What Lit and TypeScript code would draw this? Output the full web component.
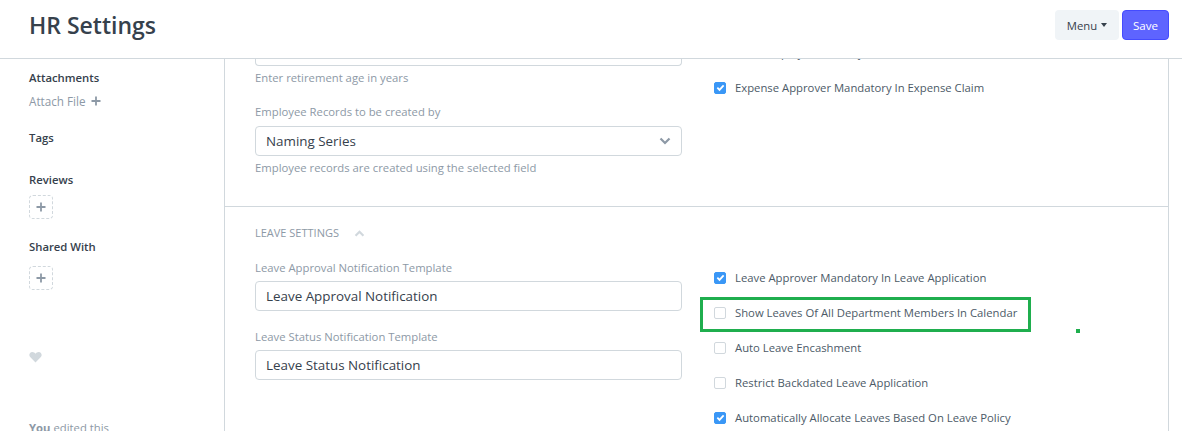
import { LitElement, html, css } from "lit";
import { customElement } from "lit/decorators.js";

const plus = html`<svg class="plus" viewBox="0 0 12 12" width="12" height="12"><path d="M6 1.5v9M1.5 6h9" stroke="#8d99a6" stroke-width="1.8" fill="none"/></svg>`;

@customElement("app-root")
export class AppRoot extends LitElement {
  static styles = css`
    :host { display: block; width: 1182px; height: 431px; overflow: hidden; background: #fff;
      font-family: "Open Sans", "Noto Sans", sans-serif; font-size: 11.3px; color: #4c5a67; }
    * { box-sizing: border-box; }
    .top { height: 59px; border-bottom: 1px solid #d1d8dd; display: flex; align-items: center; justify-content: space-between; padding: 0 13px 0 29px; }
    h1 { margin: 0; font-size: 23px; font-weight: 600; color: #36414c; line-height: 1; padding-bottom: 8px; }
    .actions { display: flex; gap: 3px; padding-bottom: 8px; align-items: center; }
    .btn { height: 30px; border-radius: 4px; display: flex; align-items: center; }
    .menu { width: 64px; background: #f0f4f7; color: #36414c; justify-content: center; gap: 4px; }
    .caret { width: 0; height: 0; border: 3.5px solid transparent; border-top: 4px solid #36414c; border-bottom: 0; }
    .save { width: 47px; background: #5e64ff; border: 1px solid #444bff; color: #fff; justify-content: center; font-size: 11.6px; }
    .body { display: flex; height: 372px; overflow: hidden; }
    .side { width: 225px; flex: none; border-right: 1px solid #d1d8dd; padding: 11px 0 0 29px; color: #36414c; }
    .st { font-weight: 600; line-height: 16px; color: #36414c; }
    .attach { margin-top: 7px; line-height: 16px; color: #8d99a6; display: flex; align-items: center; gap: 4px; font-size: 11.7px; }
    .tags { margin-top: 21px; }
    .reviews { margin-top: 26px; }
    .shared { margin-top: 20px; }
    .add { margin-top: 7px; width: 24px; height: 24px; border: 1px dashed #d1d8dd; border-radius: 4px; display: flex; align-items: center; justify-content: center; }
    .shared + .add { margin-top: 11px; }
    .heart { display: block; margin-top: 61px; }
    .edited { margin-top: 57px; line-height: 16px; color: #8d99a6; white-space: nowrap; }
    .edited b { font-weight: 700; }
    .main { width: 944px; flex: none; border-right: 1px solid #d1d8dd; }
    .sec { border-bottom: 1px solid #d1d8dd; height: 148px; padding: 0 30px; display: grid; grid-template-columns: 427px 427px; column-gap: 32px; }
    .sec2 { border-bottom: 0; height: auto; padding-top: 18px; display: block; }
    .clip { height: 7px; border: 1px solid #d1d8dd; border-top: 0; border-radius: 0 0 4px 4px; }
    .help { color: #8d99a6; line-height: 16px; margin-top: 4px; }
    .lab { color: #8d99a6; line-height: 16px; margin-top: 18px; }
    .inp { height: 30px; border: 1px solid #d1d8dd; border-radius: 4px; margin-top: 6px; padding: 0 10px; display: flex; align-items: center; justify-content: space-between; font-size: 13.4px; color: #36414c; }
    .head { display: flex; align-items: center; gap: 15px; line-height: 16px; color: #8d99a6; font-size: 11px; }
    .cols { display: grid; grid-template-columns: 427px 427px; column-gap: 32px; }
    .cols .lab:first-child { margin-top: 19px; }
    .cols .inp { margin-top: 5px; }
    .cks { padding-top: 19px; }
    .ck { display: flex; align-items: center; gap: 9px; height: 35px; position: relative; white-space: nowrap; }
    .box { width: 12px; height: 12px; border: 1px solid #d1d8dd; border-radius: 2px; background: #fff; flex: none; display: flex; align-items: center; justify-content: center; }
    .box.on { background: #3a97f6; border-color: #3a97f6; }
    .hl { position: absolute; left: -14px; top: 2px; width: 331px; height: 35px; border: 3px solid #1fae4e; pointer-events: none; }
    .dot { position: absolute; left: 1076px; top: 329px; width: 4px; height: 4px; background: #1fae4e; }
    .rightcol { margin-top: -24px; }
    .wrap { position: relative; }
  `;

  ck(label: string, on: boolean, hl = false) {
    return html`<div class="ck">
      <span class="box ${on ? "on" : ""}">${on ? html`<svg viewBox="0 0 10 10" width="9" height="9"><path d="M1.5 5.2l2.4 2.4 4.6-5" stroke="#fff" stroke-width="2" fill="none"/></svg>` : ""}</span>
      <span>${label}</span>
      ${hl ? html`<span class="hl"></span>` : ""}
    </div>`;
  }

  render() {
    return html`<div class="wrap">
      <div class="top">
        <h1>HR Settings</h1>
        <div class="actions">
          <div class="btn menu">Menu <span class="caret"></span></div>
          <div class="btn save">Save</div>
        </div>
      </div>
      <div class="body">
        <aside class="side">
          <div class="st">Attachments</div>
          <div class="attach">Attach File ${plus}</div>
          <div class="st tags">Tags</div>
          <div class="st reviews">Reviews</div>
          <div class="add">${plus}</div>
          <div class="st shared">Shared With</div>
          <div class="add">${plus}</div>
          <svg class="heart" viewBox="0 0 14 13" width="13" height="12"><path d="M7 12.5L1.2 6.6C-.6 4.6.5 1 3.5 1 5 1 6.2 1.8 7 3c.8-1.2 2-2 3.5-2 3 0 4.1 3.6 2.3 5.6z" fill="#d1d8dd"/></svg>
          <div class="edited"><b>You</b> edited this</div>
        </aside>
        <main class="main">
          <div class="sec">
            <div>
              <div class="clip"></div>
              <div class="help">Enter retirement age in years</div>
              <div class="lab">Employee Records to be created by</div>
              <div class="inp">Naming Series
                <svg viewBox="0 0 12 8" width="12" height="8"><path d="M1.5 1.5L6 6l4.5-4.5" stroke="#8d99a6" stroke-width="2.2" fill="none"/></svg>
              </div>
              <div class="help">Employee records are created using the selected field</div>
            </div>
            <div class="rightcol">
              ${this.ck("Send Employee Birthday Reminders", false)}
              ${this.ck("Expense Approver Mandatory In Expense Claim", true)}
            </div>
          </div>
          <div class="sec sec2">
            <div class="head">LEAVE SETTINGS
              <svg viewBox="0 0 12 8" width="11" height="7"><path d="M1.5 6.5L6 2l4.5 4.5" stroke="#d1d8dd" stroke-width="2.5" fill="none"/></svg>
            </div>
            <div class="cols">
              <div>
                <div class="lab">Leave Approval Notification Template</div>
                <div class="inp">Leave Approval Notification</div>
                <div class="lab">Leave Status Notification Template</div>
                <div class="inp">Leave Status Notification</div>
              </div>
              <div class="cks">
                ${this.ck("Leave Approver Mandatory In Leave Application", true)}
                ${this.ck("Show Leaves Of All Department Members In Calendar", false, true)}
                ${this.ck("Auto Leave Encashment", false)}
                ${this.ck("Restrict Backdated Leave Application", false)}
                ${this.ck("Automatically Allocate Leaves Based On Leave Policy", true)}
              </div>
            </div>
          </div>
        </main>
      </div>
      <div class="dot"></div>
    </div>`;
  }
}
